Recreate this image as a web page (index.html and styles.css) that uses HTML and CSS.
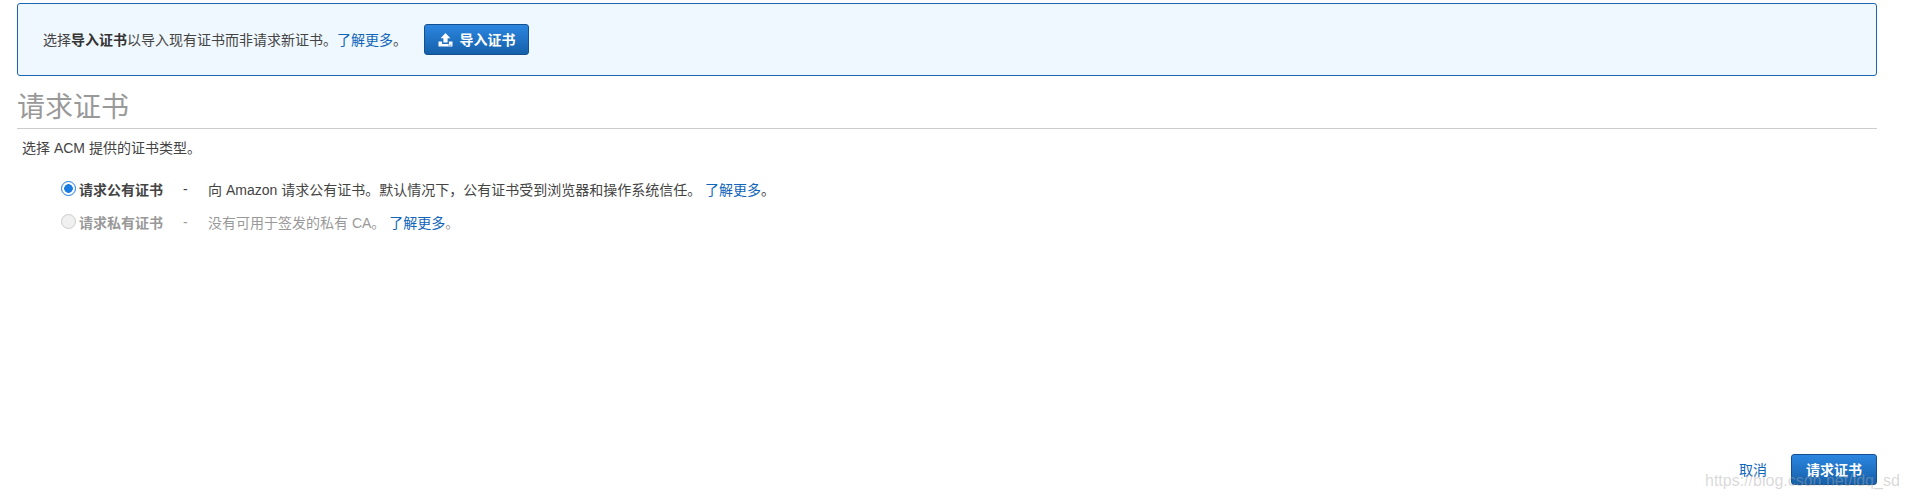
FILE: index.html
```html
<html>
    <head>
        <title>请求证书</title>
        <meta charset="UTF-8" />
        <link rel="stylesheet" href="styles.css">
    </head>
    <body>
        <div class="page">
            <div class="notice">
                <span class="notice-text">选择<b>导入证书</b>以导入现有证书而非请求新证书。<a href="#">了解更多</a>。</span>
                <button class="btn btn-import" type="button">
                    <svg class="btn-icon" width="15" height="14" viewBox="0 0 15 14">
                        <path d="M7.5 0 12.4 5.2H9.6V9.6H5.4V5.2H2.6Z" fill="#fff"/>
                        <path d="M0.5 8.6h3.6v2.4h6.8V8.6h3.6v5H0.5Z" fill="#fff"/>
                        <rect x="10.4" y="11.6" width="1" height="1" fill="#1b66b3"/>
                        <rect x="12.4" y="11.6" width="1" height="1" fill="#1b66b3"/>
                    </svg>
                    导入证书
                </button>
            </div>
            <h1>请求证书</h1>
            <p class="intro">选择 ACM 提供的证书类型。</p>
            <div class="options">
                <label class="option">
                    <input type="radio" name="cert" checked />
                    <b class="option-name">请求公有证书</b>
                    <span class="option-dash">-</span>
                    <span>向 Amazon 请求公有证书。默认情况下，公有证书受到浏览器和操作系统信任。 <a href="#">了解更多</a>。</span>
                </label>
                <label class="option disabled">
                    <input type="radio" name="cert" disabled />
                    <b class="option-name">请求私有证书</b>
                    <span class="option-dash">-</span>
                    <span>没有可用于签发的私有 CA。 <a href="#">了解更多</a>。</span>
                </label>
            </div>
            <div class="footer">
                <a class="cancel" href="#">取消</a>
                <button class="btn btn-submit" type="button">请求证书</button>
            </div>
        </div>
        <div class="watermark">https://blog.csdn.net/ldq_sd</div>
    </body>
</html>
```

FILE: styles.css
```css
body {
    margin: 0;
    color: #444;
    background: #fff;
    font-family: "Liberation Sans", "Noto Sans CJK SC", sans-serif;
    font-size: 14px;
}
a {
    color: #1166bb;
    text-decoration: none;
}
.page {
    box-sizing: border-box;
    height: 500px;
    padding: 3px 29px 15px 17px;
    display: flex;
    flex-direction: column;
}

/* Blue box at the top */
.notice {
    box-sizing: border-box;
    height: 73px;
    padding-left: 25px;
    display: flex;
    align-items: center;
    background: #f0f8ff;
    border: 1px solid #1a66b3;
    border-radius: 3px;
}
.notice-text {
    margin-bottom: 2px;
}
.notice b {
    color: #333;
}

.btn {
    height: 31px;
    padding: 0 0 2px;
    color: #fff;
    font-family: inherit;
    font-size: 14px;
    font-weight: bold;
    background: linear-gradient(#2b86e0, #1560aa);
    border: 1px solid #12508f;
    border-radius: 3px;
    cursor: pointer;
}
.btn-import {
    width: 105px;
    margin-left: 17px;
}
.btn-icon {
    margin-right: 3px;
    vertical-align: -2px;
}
.btn-submit {
    width: 86px;
}

h1 {
    margin: 15px 0 0;
    padding-bottom: 3px;
    color: #999;
    font-size: 28px;
    font-weight: normal;
    line-height: 34px;
    border-bottom: 1px solid #ccc;
}
.intro {
    margin: 9px 0 0 5px;
    line-height: 20px;
}

.options {
    margin: 14px 0 0 44px;
}
.option {
    height: 33px;
    display: flex;
    align-items: center;
}
.option input {
    appearance: none;
    box-sizing: border-box;
    width: 15px;
    height: 15px;
    margin: 0 3px 0 0;
    border: 1px solid #1a7be0;
    border-radius: 50%;
    background: #fff;
}
.option input:checked {
    background: radial-gradient(circle, #1a7be0 4px, #fff 4.6px);
}
.option-name {
    width: 104px;
}
.option-dash {
    width: 25px;
}
.disabled {
    color: #999;
}
.disabled input {
    background: #f0f0f0;
    border-color: #ccc;
}

.footer {
    margin-top: auto;
    display: flex;
    align-items: center;
    justify-content: flex-end;
    gap: 24px;
}
.cancel {
    margin-bottom: 2px;
}

.watermark {
    position: absolute;
    top: 472px;
    left: 1705px;
    color: rgba(170, 170, 170, 0.45);
    font-size: 16px;
    line-height: 18px;
    pointer-events: none;
}
```
